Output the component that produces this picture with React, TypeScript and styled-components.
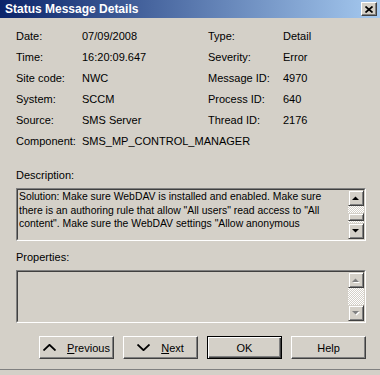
import React from "react";
import styled, { createGlobalStyle } from "styled-components";

const Global = createGlobalStyle`
  html, body { margin: 0; padding: 0; background: #D4D0C8; }
  body {
    font-family: "Liberation Sans", Arial, sans-serif;
    font-size: 11px;
    color: #000;
  }
`;

const Dialog = styled.div`
  width: 380px;
  height: 370px;
  box-sizing: border-box;
  border-bottom: 1px solid #808080;
  background: #D4D0C8;
  display: flex;
  flex-direction: column;
`;

const TitleBar = styled.div`
  height: 18px;
  flex: none;
  background: linear-gradient(to right, #0a246a, #a6caf0);
  display: flex;
  align-items: center;
  justify-content: space-between;
  padding: 0 3px 0 5px;
`;

const Title = styled.span`
  color: #fff;
  font-family: "Liberation Sans", Arial, sans-serif;
  font-weight: bold;
  font-size: 12px;
  line-height: 18px;
`;

const CloseButton = styled.div`
  width: 16px;
  height: 14px;
  box-sizing: border-box;
  background: #d4d0c8;
  border: 1px solid;
  border-color: #fff #404040 #404040 #fff;
  box-shadow: inset -1px -1px #808080;
  display: flex;
  align-items: center;
  justify-content: center;
`;

const Content = styled.div`
  padding: 0 14px 0 16px;
  display: flex;
  flex-direction: column;
`;

const InfoGrid = styled.div`
  display: grid;
  grid-template-columns: 66px 126px 75px 1fr;
  grid-auto-rows: 21px;
  align-items: center;
  margin-top: 7px;
  line-height: 14px;
`;

const Cell = styled.span<{ $span?: boolean }>`
  white-space: nowrap;
  ${(p) => (p.$span ? "grid-column: 2 / -1;" : "")}
`;

const SectionLabel = styled.div<{ $top: number }>`
  margin-top: ${(p) => p.$top}px;
  line-height: 14px;
  height: 14px;
`;

const SunkenOuter = styled.div<{ $top: number }>`
  margin-top: ${(p) => p.$top}px;
  height: 53px;
  box-sizing: border-box;
  border: 1px solid;
  border-color: #808080 #fff #fff #808080;
`;

const SunkenInner = styled.div`
  height: 100%;
  box-sizing: border-box;
  border: 1px solid;
  border-color: #404040 #d4d0c8 #d4d0c8 #404040;
  display: flex;
`;

const TextArea = styled.div`
  flex: 1;
  overflow: hidden;
  padding: 0 2px 0 1px;
  font-size: 10.4px;
  line-height: 13.5px;
  color: #000;
`;

const Line = styled.div`
  white-space: nowrap;
`;

const ScrollBar = styled.div`
  width: 16px;
  flex: none;
  display: flex;
  flex-direction: column;
`;

const ScrollButton = styled.div`
  width: 16px;
  height: 16px;
  flex: none;
  box-sizing: border-box;
  background: #d4d0c8;
  border: 1px solid;
  border-color: #d4d0c8 #404040 #404040 #d4d0c8;
  box-shadow: inset 1px 1px #fff, inset -1px -1px #808080;
  display: flex;
  align-items: center;
  justify-content: center;
`;

const Track = styled.div<{ $h: number }>`
  height: ${(p) => p.$h}px;
  flex: none;
  background: repeating-conic-gradient(#d4d0c8 0 25%, #ffffff 0 50%) 0 0 / 2px 2px;
`;

const Thumb = styled.div<{ $h: number }>`
  height: ${(p) => p.$h}px;
  flex: none;
  box-sizing: border-box;
  background: #d4d0c8;
  border: 1px solid;
  border-color: #d4d0c8 #404040 #404040 #d4d0c8;
  box-shadow: inset 1px 1px #fff, inset -1px -1px #808080;
`;

const ButtonRow = styled.div`
  display: flex;
  justify-content: flex-end;
  gap: 9px;
  margin-top: 13px;
`;

const Button = styled.div<{ $default?: boolean }>`
  width: 75px;
  height: 23px;
  box-sizing: border-box;
  background: #d4d0c8;
  display: flex;
  align-items: center;
  justify-content: center;
  gap: 11px;
  line-height: 14px;
  ${(p) =>
    p.$default
      ? `border: 1px solid #000;
         box-shadow: inset 1px 1px #fff, inset -1px -1px #404040, inset -2px -2px #808080;`
      : `border: 1px solid;
         border-color: #fff #404040 #404040 #fff;
         box-shadow: inset -1px -1px #808080;`}
`;

const Arrow = ({ dir, disabled }: { dir: "up" | "down"; disabled?: boolean }) => {
  const pts = dir === "up" ? "0,4 7,4 3.5,0.5" : "0,0 7,0 3.5,3.5";
  return (
    <svg width="8" height="5" viewBox="0 0 8 5" style={{ overflow: "visible" }}>
      {disabled && <polygon points={pts} fill="#fff" transform="translate(1,1)" />}
      <polygon points={pts} fill={disabled ? "#808080" : "#000"} />
    </svg>
  );
};

const Chevron = ({ dir }: { dir: "up" | "down" }) => (
  <svg width="13" height="7" viewBox="0 0 13 7">
    <polyline
      points={dir === "up" ? "0.5,6.5 6.5,0.8 12.5,6.5" : "0.5,0.5 6.5,6.2 12.5,0.5"}
      fill="none"
      stroke="#000"
      strokeWidth="1.8"
    />
  </svg>
);

const rows: [string, string, string?, string?][] = [
  ["Date:", "07/09/2008", "Type:", "Detail"],
  ["Time:", "16:20:09.647", "Severity:", "Error"],
  ["Site code:", "NWC", "Message ID:", "4970"],
  ["System:", "SCCM", "Process ID:", "640"],
  ["Source:", "SMS Server", "Thread ID:", "2176"],
];

export default function App() {
  return (
    <>
      <Global />
      <Dialog>
        <TitleBar>
          <Title>Status Message Details</Title>
          <CloseButton>
            <svg width="8" height="7" viewBox="0 0 8 7">
              <path d="M0.5 0.5 L7.5 6.5 M7.5 0.5 L0.5 6.5" stroke="#000" strokeWidth="1.7" />
            </svg>
          </CloseButton>
        </TitleBar>
        <Content>
          <InfoGrid>
            {rows.map(([a, b, c, d]) => (
              <React.Fragment key={a}>
                <Cell>{a}</Cell>
                <Cell>{b}</Cell>
                <Cell>{c}</Cell>
                <Cell>{d}</Cell>
              </React.Fragment>
            ))}
            <Cell>Component:</Cell>
            <Cell $span>SMS_MP_CONTROL_MANAGER</Cell>
          </InfoGrid>

          <SectionLabel $top={17}>Description:</SectionLabel>
          <SunkenOuter $top={6}>
            <SunkenInner>
              <TextArea>
                <Line>Solution: Make sure WebDAV is installed and enabled. Make sure</Line>
                <Line>there is an authoring rule that allow "All users" read access to "All</Line>
                <Line>content". Make sure the WebDAV settings "Allow anonymous</Line>
              </TextArea>
              <ScrollBar>
                <ScrollButton>
                  <Arrow dir="up" />
                </ScrollButton>
                <Track $h={7} />
                <Thumb $h={8} />
                <Track $h={2} />
                <ScrollButton>
                  <Arrow dir="down" />
                </ScrollButton>
              </ScrollBar>
            </SunkenInner>
          </SunkenOuter>

          <SectionLabel $top={9}>Properties:</SectionLabel>
          <SunkenOuter $top={6}>
            <SunkenInner>
              <TextArea />
              <ScrollBar>
                <ScrollButton>
                  <Arrow dir="up" disabled />
                </ScrollButton>
                <Track $h={17} />
                <ScrollButton>
                  <Arrow dir="down" disabled />
                </ScrollButton>
              </ScrollBar>
            </SunkenInner>
          </SunkenOuter>

          <ButtonRow>
            <Button>
              <Chevron dir="up" />
              <span>
                <u>P</u>revious
              </span>
            </Button>
            <Button>
              <Chevron dir="down" />
              <span>
                <u>N</u>ext
              </span>
            </Button>
            <Button $default>OK</Button>
            <Button>Help</Button>
          </ButtonRow>
        </Content>
      </Dialog>
    </>
  );
}
